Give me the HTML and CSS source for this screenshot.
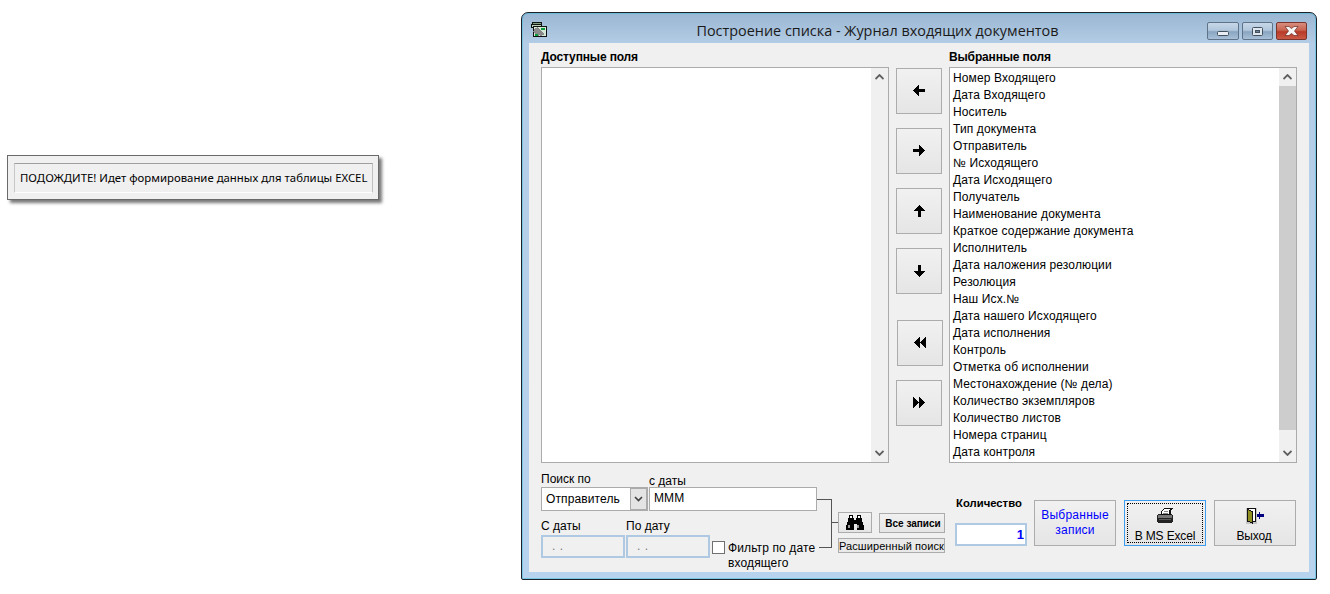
FILE: index.html
```html
<!DOCTYPE html>
<html lang="ru">
<head>
<meta charset="utf-8">
<title>Построение списка</title>
<link rel="stylesheet" href="styles.css">
</head>
<body>
<div class="notice"><div class="notice-inner">ПОДОЖДИТЕ! Идет формирование данных для таблицы EXCEL</div></div>

<div class="window">
  <div class="titlebar">
    <svg class="app-icon" width="18" height="18" viewBox="0 0 18 18" shape-rendering="crispEdges">
      <path d="M2.5 1.5h9v3h-9z" fill="#7f9f7f" stroke="#111"/>
      <path d="M1.5 3.5h10v3h-10z" fill="#b8d0b8" stroke="#111"/>
      <path d="M3.5 5.5h13v10h-13z" fill="#d8e8d8" stroke="#111"/>
      <path d="M5 8l7 7M4 10l5 5M7 7l7 7" stroke="#8a8a8a" stroke-width="2" fill="none"/>
      <path d="M11 7h4v2h-4zM5 13h3v2h-3z" fill="#0a9a3a"/>
    </svg>
    <div class="title">Построение списка - Журнал входящих документов</div>
    <div class="caption-btns">
      <div class="cap cap-min"><svg class="cap-min-icon" width="12" height="5" viewBox="0 0 12 5"><rect x="0.5" y="0.5" width="11" height="4" rx="1" fill="#e8eef4" stroke="#44505c"/></svg></div>
      <div class="cap cap-max"><svg width="11" height="9" viewBox="0 0 11 9"><rect x="0.5" y="0.5" width="10" height="8" rx="1" fill="#dfe8f0" stroke="#44505c"/><rect x="3.5" y="3.5" width="4" height="2" fill="#6d8199" stroke="#44505c"/></svg></div>
      <div class="cap cap-close"><svg width="15" height="10" viewBox="0 0 15 10"><path d="M1 .5h4l2.500 2 2.500-2h4l-3.500 4.500 3.500 4.500h-4l-2.500-2-2.500 2h-4l3.500-4.500z" fill="#f6f6f6" stroke="#6b2a22" stroke-width="0.7"/></svg></div>
    </div>
  </div>

  <div class="client">
    <div class="lists">
      <div class="list-col">
        <div class="list-label">Доступные поля</div>
        <div class="listbox">
          <div class="list-items"></div>
          <div class="scrollbar">
            <svg class="chev" width="9" height="6" viewBox="0 0 9 6"><path d="M0.5 5L4.5 1l4 4" fill="none" stroke="#606060" stroke-width="1.8"/></svg>
            <div class="track"></div>
            <svg class="chev" width="9" height="6" viewBox="0 0 9 6"><path d="M0.5 1L4.5 5l4-4" fill="none" stroke="#606060" stroke-width="1.8"/></svg>
          </div>
        </div>
      </div>

      <div class="move-col">
        <button class="btn move"><svg class="raised" width="12" height="11" viewBox="0 0 12 11" shape-rendering="crispEdges"><path d="M0 5h1V4h1V3h1V2h1V1h1V0h1v4h6v3H6v4H5v-1H4V9H3V8H2V7H1V6H0z"/></svg></button>
        <button class="btn move"><svg class="raised" width="12" height="11" viewBox="0 0 12 11" shape-rendering="crispEdges"><path d="M12 5h-1V4h-1V3H9V2H8V1H7V0H6v4H0v3h6v4h1v-1h1V9h1V8h1V7h1V6h1z"/></svg></button>
        <button class="btn move"><svg width="11" height="12" viewBox="0 0 11 12" shape-rendering="crispEdges"><path d="M5 0h1v1h1v1h1v1h1v1h1v1h1v1H7v6H4V6H0V5h1V4h1V3h1V2h1V1h1z"/></svg></button>
        <button class="btn move move-gap"><svg width="11" height="12" viewBox="0 0 11 12" shape-rendering="crispEdges"><path d="M5 12h1v-1h1v-1h1V9h1V8h1V7h1V6H7V0H4v6H0v1h1v1h1v1h1v1h1v1h1z"/></svg></button>
        <button class="btn move move-shift"><svg class="raised" width="12" height="11" viewBox="0 0 12 11" shape-rendering="crispEdges"><path d="M0 5h1V4h1V3h1V2h1V1h1V0h1v11H5v-1H4V9H3V8H2V7H1V6H0zM6 5h1V4h1V3h1V2h1V1h1V0h1v11h-1v-1h-1V9H9V8H8V7H7V6H6z"/></svg></button>
        <button class="btn move"><svg class="raised" width="12" height="11" viewBox="0 0 12 11" shape-rendering="crispEdges"><path d="M6 5H5V4H4V3H3V2H2V1H1V0H0v11h1v-1h1V9h1V8h1V7h1V6h1zM12 5h-1V4h-1V3H9V2H8V1H7V0H6v11h1v-1h1V9h1V8h1V7h1V6h1z"/></svg></button>
      </div>

      <div class="list-col">
        <div class="list-label">Выбранные поля</div>
        <div class="listbox">
          <ul class="list-items">
            <li>Номер Входящего</li>
            <li>Дата Входящего</li>
            <li>Носитель</li>
            <li>Тип документа</li>
            <li>Отправитель</li>
            <li>№ Исходящего</li>
            <li>Дата Исходящего</li>
            <li>Получатель</li>
            <li>Наименование документа</li>
            <li>Краткое содержание документа</li>
            <li>Исполнитель</li>
            <li>Дата наложения резолюции</li>
            <li>Резолюция</li>
            <li>Наш Исх.№</li>
            <li>Дата нашего Исходящего</li>
            <li>Дата исполнения</li>
            <li>Контроль</li>
            <li>Отметка об исполнении</li>
            <li>Местонахождение (№ дела)</li>
            <li>Количество экземпляров</li>
            <li>Количество листов</li>
            <li>Номера страниц</li>
            <li>Дата контроля</li>
          </ul>
          <div class="scrollbar">
            <svg class="chev" width="9" height="6" viewBox="0 0 9 6"><path d="M0.5 5L4.5 1l4 4" fill="none" stroke="#606060" stroke-width="1.8"/></svg>
            <div class="track"><div class="thumb"></div></div>
            <svg class="chev" width="9" height="6" viewBox="0 0 9 6"><path d="M0.5 1L4.5 5l4-4" fill="none" stroke="#606060" stroke-width="1.8"/></svg>
          </div>
        </div>
      </div>
    </div>

    <div class="bottom">
      <div class="search">
        <div class="search-fields">
          <div class="row-top">
            <div class="field">
              <label class="lbl lbl-search">Поиск по</label>
              <div class="select"><span class="select-text">Отправитель</span><span class="select-arrow"><svg width="9" height="6" viewBox="0 0 9 6"><path d="M1 1l3.500 3.500L8 1" fill="none" stroke="#404040" stroke-width="1.6"/></svg></span></div>
            </div>
            <div class="field">
              <label class="lbl lbl-from">с даты</label>
              <div class="input input-main">МММ</div>
            </div>
          </div>
          <div class="row-dates">
            <div class="field">
              <label class="lbl lbl-date">С даты</label>
              <div class="input input-date">. .</div>
            </div>
            <div class="field">
              <label class="lbl lbl-date">По дату</label>
              <div class="input input-date">. .</div>
            </div>
            <div class="check">
              <span class="checkbox"></span>
              <span class="check-text">Фильтр по дате<br>входящего</span>
            </div>
          </div>
        </div>
        <div class="search-actions">
          <div class="actions-row">
            <button class="btn btn-find"><svg width="20" height="16" viewBox="0 0 20 16" shape-rendering="crispEdges"><path d="M4 0h4v3h1v2h2V3h1V0h4v3h1v4h1v3h1v5h-7V9H9v6H1v-5h1V7h1V3h1z"/><path d="M5 1h2v2H5zM13 1h2v2h-2z" fill="#fff"/><path d="M3 10h2v3H3zM12 10h2v3h-2z" fill="#999"/></svg></button>
            <button class="btn btn-all">Все записи</button>
          </div>
          <button class="btn btn-ext">Расширенный поиск</button>
        </div>
        <svg class="connector" width="22" height="50" viewBox="0 0 22 50" shape-rendering="crispEdges"><path d="M0 .5h14.500v48H2M14.500 23.500H21" fill="none" stroke="#555"/></svg>
      </div>

      <div class="result">
        <div class="count">
          <div class="count-label">Количество</div>
          <div class="count-input">1</div>
        </div>
        <button class="btn action action-blue">Выбранные<br>записи</button>
        <button class="btn action action-focus">
          <svg class="act-icon" width="18" height="16" viewBox="0 0 18 16" shape-rendering="crispEdges"><path d="M1 7h1V6h14v1h1v7h-1v1H2v-1H1z" fill="#222"/><path d="M2 7h14v3H2z" fill="#777"/><path d="M3 11h12v1H3z" fill="#5a5a5a"/><path d="M8 0h9v1h-1v1h-1v5H5V3h1V2h1V1h1z" fill="#111"/><path d="M8 1h6v1h-1v4H6V3h1V2h1z" fill="#fff"/><path d="M8 3h4M7 5h5" stroke="#888"/></svg>
          <span class="act-label">В MS Excel</span>
        </button>
        <button class="btn action">
          <svg class="act-icon" width="18" height="16" viewBox="0 0 18 16" shape-rendering="crispEdges"><path d="M0 0h11v16H0z" fill="#c4c4c4"/><path d="M1.500.5h8v13h-8z" fill="#fff" stroke="#111"/><path d="M1.500 1.500l5 2v11.500l-5-2z" fill="#8f8f22" stroke="#111"/><path d="M11 6h2V4h1v2h4v3h-4v2h-1V9h-2z" fill="#000080"/></svg>
          <span class="act-label act-exit">Выход</span>
        </button>
      </div>
    </div>
  </div>
</div>
</body>
</html>
```
FILE: styles.css
```css
* { box-sizing: border-box; }
html, body { margin: 0; padding: 0; }
body {
  width: 1330px;
  height: 594px;
  background: #fff;
  position: relative;
  overflow: hidden;
  font-family: "Liberation Sans", Arial, sans-serif;
  font-size: 12px;
  color: #000;
}

/* desktop windows */
.notice {
  position: absolute;
  left: 7px;
  top: 155px;
  width: 372px;
  height: 45px;
  padding: 7px 5px 6px 6px;
  background: #f0f0f0;
  border: 1px solid #6a6a6a;
  box-shadow: 3px 3px 3px #7a7a7a;
}
.notice-inner {
  height: 100%;
  padding-left: 5px;
  border: 1px solid #fff;
  border-top-color: #a0a0a0;
  border-left-color: #c8c8c8;
  border-right-color: #c0c0c0;
  font-family: "Noto Sans", sans-serif;
  font-size: 11.37px;
  line-height: 28px;
  white-space: nowrap;
}

.window {
  position: absolute;
  left: 521px;
  top: 12px;
  width: 796px;
  height: 568px;
  display: flex;
  flex-direction: column;
  padding: 0 7px 7px;
  border: 1px solid #1c2228;
  border-radius: 7px 7px 2px 2px;
  background: linear-gradient(#9ab6d2 0, #b4cde6 31px, #b8d3ee 100%);
  box-shadow: inset 0 0 0 1px rgba(70, 190, 225, .55);
}

.titlebar {
  height: 30px;
  display: flex;
  align-items: flex-start;
  flex: none;
}
.app-icon { margin: 8px 0 0 1px; flex: none; }
.title {
  flex: 1;
  padding-top: 8px;
  text-align: center;
  font-family: "Open Sans", sans-serif;
  font-size: 14.4px;
  line-height: 20px;
  color: #1a1a1a;
  white-space: nowrap;
}
.caption-btns { display: flex; gap: 3px; padding-top: 9px; margin-right: 2px; }
.cap {
  width: 31px;
  height: 18px;
  display: flex;
  align-items: center;
  justify-content: center;
  border: 1px solid #5f7388;
  border-radius: 2px;
  background: linear-gradient(#c6d7e8 0, #b2c7dc 45%, #8aa5c0 55%, #a8c0d8 100%);
}
.cap-min { width: 32px; }
.cap-min-icon { margin-top: 5px; }
.cap-close {
  border-color: #7a342c;
  background: linear-gradient(#d88e80 0, #c9624f 45%, #b83a28 55%, #c85a45 100%);
}

.client {
  flex: 1;
  background: #f0f0f0;
  padding: 6px 12px 0;
  display: flex;
  flex-direction: column;
}

/* lists */
.lists { display: flex; height: 414px; flex: none; }
.list-col { width: 348px; flex: none; display: flex; flex-direction: column; }
.list-label { height: 18px; font-weight: bold; line-height: 17px; letter-spacing: -.15px; }
.listbox {
  height: 396px;
  display: flex;
  background: #fff;
  border: 1px solid #ababab;
}
.list-items {
  flex: 1;
  list-style: none;
  margin: 0;
  padding: 2px 0 0 3px;
}
.list-items li { height: 17px; line-height: 17px; white-space: nowrap; letter-spacing: .12px; }
.scrollbar {
  width: 17px;
  display: flex;
  flex-direction: column;
  align-items: center;
  background: #f0f0f0;
}
.chev { flex: none; margin: 6px 0; }
.track { flex: 1; width: 100%; }
.thumb { height: 344px; background: #cdcdcd; }

/* buttons */
.btn {
  font: inherit;
  color: #000;
  padding: 0;
  border: 1px solid #acacac;
  background: linear-gradient(#f1f1f1, #e5e5e5);
}
.move-col {
  width: 60px;
  flex: none;
  padding: 19px 0 0 7px;
  display: flex;
  flex-direction: column;
  align-items: flex-start;
  gap: 14px;
}
.move {
  width: 46px;
  height: 46px;
  flex: none;
  display: flex;
  align-items: center;
  justify-content: center;
}
.raised { margin-bottom: 2px; }
.move-gap { margin-bottom: 12px; }
.move-shift { margin-left: 1px; }

/* bottom */
.bottom { display: flex; flex: 1; }
.search { position: relative; display: flex; width: 404px; flex: none; padding-top: 9px; }
.search-fields { width: 276px; flex: none; }
.row-top { display: flex; gap: 1px; height: 39px; }
.field { display: flex; flex-direction: column; }
.lbl { height: 15px; line-height: 14px; }
.lbl-from { padding-top: 3px; line-height: 13px; }
.lbl-date { height: 24px; padding-top: 8px; }
.select {
  width: 107px;
  height: 24px;
  display: flex;
  align-items: center;
  justify-content: space-between;
  background: #fff;
  border: 1px solid #ababab;
  padding-left: 4px;
  letter-spacing: .12px;
}
.select-arrow {
  width: 17px;
  height: 22px;
  display: flex;
  align-items: center;
  justify-content: center;
  background: #e4e4e4;
  border: 1px solid #ababab;
}
.input-main {
  width: 168px;
  height: 25px;
  background: #fff;
  border: 1px solid #ababab;
  padding-left: 4px;
  line-height: 21px;
  letter-spacing: .12px;
}
.row-dates { display: flex; gap: 1px; }
.input-date {
  width: 84px;
  height: 23px;
  border: 2px solid #afc9e3;
  padding-left: 9px;
  line-height: 19px;
  color: #777;
  word-spacing: 1px;
}
.check { display: flex; gap: 3px; padding: 30px 0 0 1px; }
.checkbox {
  width: 13px;
  height: 13px;
  flex: none;
  background: #fff;
  border: 1px solid #707070;
}
.check-text { line-height: 15px; white-space: nowrap; letter-spacing: .12px; width: 112px; }

.search-actions {
  margin: 40px 0 0 21px;
  width: 107px;
  display: flex;
  flex-direction: column;
  flex: none;
}
.actions-row { display: flex; justify-content: space-between; height: 25px; }
.btn-find {
  width: 34px;
  height: 21px;
  display: flex;
  align-items: center;
  justify-content: center;
}
.btn-all {
  width: 66px;
  height: 20px;
  margin-top: 1px;
  padding-left: 2px;
  font-size: 10px;
  font-weight: bold;
}
.btn-ext {
  height: 15px;
  margin-top: 1px;
  line-height: 12px;
  font-size: 11px;
  letter-spacing: .08px;
  white-space: nowrap;
  background: #e9e9e9;
}
.connector { position: absolute; left: 276px; top: 36px; }

.result { display: flex; margin-left: 10px; padding-top: 37px; }
.count { width: 79px; flex: none; }
.count-label { height: 23px; font-weight: bold; font-size: 11.3px; line-height: 7px; padding-left: 1px; }
.count-input {
  width: 72px;
  height: 23px;
  background: #fff;
  border: 2px solid #afc9e3;
  padding-right: 1px;
  text-align: right;
  color: #0000ff;
  font-weight: bold;
  font-size: 13px;
  line-height: 20px;
}
.action {
  width: 82px;
  height: 46px;
  margin-right: 8px;
  flex: none;
  display: flex;
  flex-direction: column;
  align-items: center;
  justify-content: flex-start;
  line-height: 15px;
  position: relative;
}
.action-blue { color: #0000ff; letter-spacing: .25px; justify-content: center; }
.action-focus { border-color: #3d9bf0; }
.action-focus::after {
  content: "";
  position: absolute;
  inset: 2px;
  border: 1px dotted #000;
}
.act-icon { margin: 7px 0 5px; flex: none; }
.act-label { letter-spacing: -.15px; }
.act-exit { margin-right: 2px; }
```
